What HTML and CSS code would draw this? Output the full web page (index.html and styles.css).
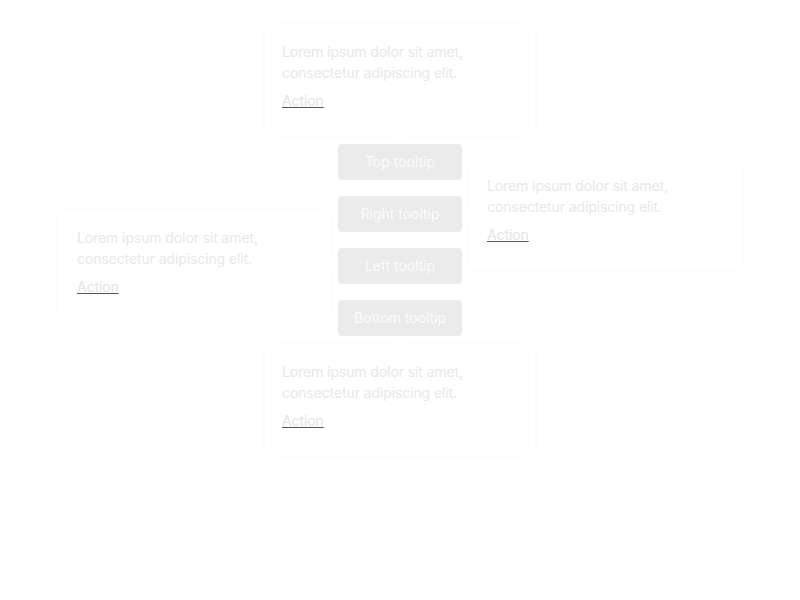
FILE: index.html
```html
<!DOCTYPE html>
<html lang="en">
<head>
<meta charset="utf-8">
<title>Tooltips</title>
<link rel="stylesheet" href="styles.css">
</head>
<body>
<main class="stack">
  <div class="anchor">
    <button class="btn">Top tooltip</button>
    <div class="pop pop-top">
      <p class="pop-text">Lorem ipsum dolor sit amet, consectetur adipiscing elit.</p>
      <a class="pop-link" href="#">Action</a>
    </div>
  </div>
  <div class="anchor">
    <button class="btn">Right tooltip</button>
    <div class="pop pop-right">
      <p class="pop-text">Lorem ipsum dolor sit amet, consectetur adipiscing elit.</p>
      <a class="pop-link" href="#">Action</a>
    </div>
  </div>
  <div class="anchor">
    <button class="btn">Left tooltip</button>
    <div class="pop pop-left">
      <p class="pop-text">Lorem ipsum dolor sit amet, consectetur adipiscing elit.</p>
      <a class="pop-link" href="#">Action</a>
    </div>
  </div>
  <div class="anchor">
    <button class="btn">Bottom tooltip</button>
    <div class="pop pop-bottom">
      <p class="pop-text">Lorem ipsum dolor sit amet, consectetur adipiscing elit.</p>
      <a class="pop-link" href="#">Action</a>
    </div>
  </div>
</main>
</body>
</html>
```

FILE: styles.css
```css
* { box-sizing: border-box; }
html, body { margin: 0; padding: 0; background: #ffffff; }
body {
  font-family: Inter, "Noto Sans", sans-serif;
  width: 800px;
  height: 600px;
  overflow: hidden;
}
.stack {
  display: flex;
  flex-direction: column;
  align-items: center;
  gap: 16px;
  padding-top: 144px;
}
.anchor {
  position: relative;
}
.btn {
  display: block;
  width: 124px;
  height: 36px;
  border: none;
  border-radius: 4px;
  background: #ebebeb;
  color: #fafafa;
  font-family: Inter, "Noto Sans", sans-serif;
  font-size: 14px;
  line-height: 20px;
  padding: 0;
}
.pop {
  position: absolute;
  width: 270px;
  height: 110px;
  padding: 16px 17px 0 17px;
  background: #ffffff;
  border-radius: 6px;
  box-shadow: 0 0 10px rgba(0, 0, 0, 0.025), 0 0 2px rgba(0, 0, 0, 0.015);
  z-index: 2;
}
.pop::after {
  content: "";
  position: absolute;
  width: 10px;
  height: 10px;
  background: #ffffff;
  transform: rotate(45deg);
}
.pop-top {
  bottom: calc(100% + 9px);
  left: 50%;
  margin-left: -135px;
}
.pop-top::after { left: 130px; bottom: -5px; }
.pop-bottom {
  top: calc(100% + 9px);
  left: 50%;
  margin-left: -135px;
}
.pop-bottom::after { left: 130px; top: -5px; }
.pop-right {
  left: calc(100% + 8px);
  top: 50%;
  margin-top: -55px;
}
.pop-right::after { left: -5px; top: 50px; }
.pop-left {
  right: calc(100% + 8px);
  top: 50%;
  margin-top: -55px;
}
.pop-left::after { right: -5px; top: 50px; }
.pop-text {
  margin: 0;
  font-size: 14px;
  line-height: 21px;
  color: #e8e8e8;
  max-width: 200px;
  letter-spacing: -0.1px;
}
.pop-link {
  display: inline-block;
  margin-top: 8px;
  font-size: 14px;
  line-height: 20px;
  color: #e4e4e4;
  text-decoration: underline;
  text-decoration-color: #555555;
  letter-spacing: -0.1px;
}
```
